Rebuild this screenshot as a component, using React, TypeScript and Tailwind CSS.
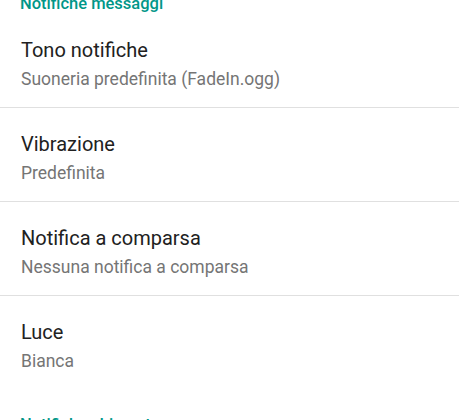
import React from "react";

const rows = [
  { title: "Tono notifiche", sub: "Suoneria predefinita (FadeIn.ogg)", divider: true },
  { title: "Vibrazione", sub: "Predefinita", divider: true },
  { title: "Notifica a comparsa", sub: "Nessuna notifica a comparsa", divider: true },
  { title: "Luce", sub: "Bianca", divider: false },
];

export default function App() {
  return (
    <div
      className="w-[459px] h-[420px] overflow-hidden bg-white"
      style={{ fontFamily: "Roboto, 'Noto Sans', sans-serif" }}
    >
      <div className="-mt-[6px] h-[20px] px-[20px]">
        <div className="text-[16.5px] leading-[20px] font-medium text-[#009688]">Notifiche messaggi</div>
      </div>
      {rows.map((r) => (
        <div key={r.title} className="h-[94px] flex flex-col">
          <div className="flex-1 px-[21px] pt-[24px]">
            <div className="text-[20px] leading-[24px] text-[#212121]">{r.title}</div>
            <div className="mt-[7px] text-[17.5px] leading-[20px] text-[#757575]">{r.sub}</div>
          </div>
          {r.divider && <div className="h-px bg-[#e0e0e0]" />}
        </div>
      ))}
      <div className="px-[20px] pt-[25px]">
        <div className="text-[16.5px] leading-[20px] font-medium text-[#009688]">Notifiche chiamate</div>
      </div>
    </div>
  );
}
